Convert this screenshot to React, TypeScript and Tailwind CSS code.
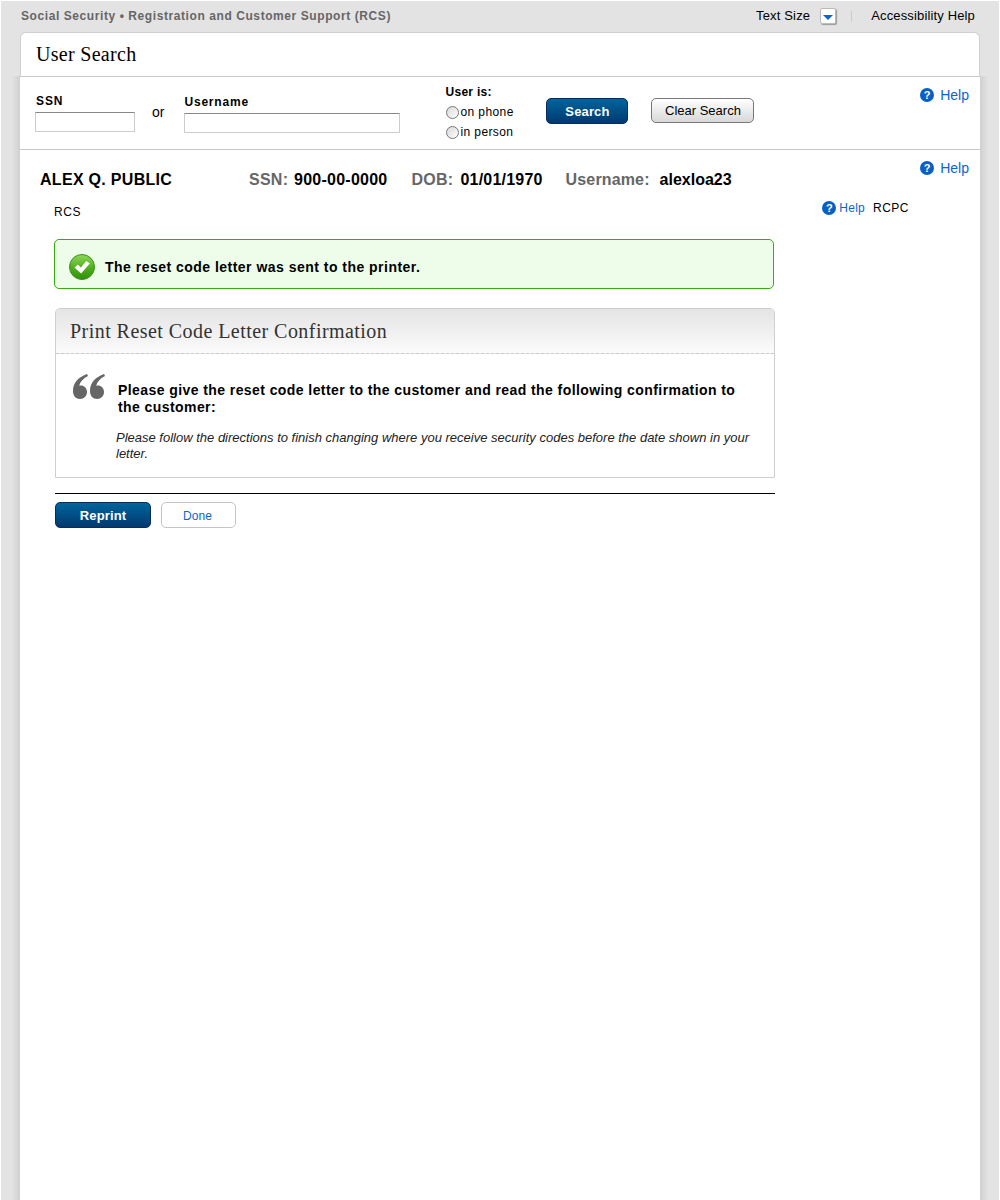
import React from "react";

const sans = "font-['Liberation_Sans',Arial,sans-serif]";
const serif = "font-['Liberation_Serif','Times_New_Roman',serif]";

const HelpIcon = () => (
  <span className="flex h-[14px] w-[14px] items-center justify-center rounded-full bg-[#0a5fc4] text-[11px] font-bold leading-none text-white">?</span>
);

const HelpLink = ({ className = "" }: { className?: string }) => (
  <div className={`flex items-center text-[14px] leading-4 text-[#0a66cc] ${className}`}>
    <HelpIcon />
    <span className="ml-[6px]">Help</span>
  </div>
);

const Radio = ({ label }: { label: string }) => (
  <div className="flex h-5 items-center">
    <span className="h-[13px] w-[13px] rounded-full border border-[#777] bg-gradient-to-br from-[#d8d8d8] to-white" />
    <span className="ml-[1px] tracking-[0.4px]">{label}</span>
  </div>
);

const BlueButton = ({ children, className = "" }: { children: React.ReactNode; className?: string }) => (
  <button className={`h-[26px] rounded-[5px] border border-[#0b2a5e] bg-gradient-to-b from-[#00659c] to-[#003a70] pt-[1px] text-[13px] font-bold tracking-[0.15px] text-white ${className}`}>
    {children}
  </button>
);

const CheckIcon = () => (
  <svg width="26" height="26" viewBox="0 0 26 26" className="shrink-0">
    <defs>
      <linearGradient id="okGreen" x1="0" y1="0" x2="0" y2="1">
        <stop offset="0" stopColor="#8ed85a" />
        <stop offset="0.55" stopColor="#4fae1c" />
        <stop offset="1" stopColor="#2f8f0c" />
      </linearGradient>
    </defs>
    <circle cx="13" cy="13" r="12.500" fill="url(#okGreen)" stroke="#3b8f1c" />
    <path d="M5.500 13.500l3.300-3 3 3 5.500-6.500 3.500 2.500-8.700 10z" fill="#fff" />
  </svg>
);

const QuoteIcon = () => (
  <svg width="34" height="27" viewBox="0 0 34 27" className="shrink-0">
    <path d="M15 1C7 4 1 9 1 18c0 5 3 8 7 8s7-3 7-7-3-6.500-6-6.500c-.8 0-1.300.1-1.800.3C8 9 11 5.500 16 3z" fill="#666" />
    <path d="M32 1c-8 3-14 8-14 17 0 5 3 8 7 8s7-3 7-7-3-6.500-6-6.500c-.8 0-1.300.1-1.800.3C25 9 28 5.500 33 3z" fill="#666" />
  </svg>
);

const Info = ({ label, value, labelW, className = "" }: { label: string; value: string; labelW: string; className?: string }) => (
  <div className={`flex text-[16px] font-bold ${className}`}>
    <span className={`text-[#666] ${labelW}`}>{label}</span>
    <span className="text-black">{value}</span>
  </div>
);

export default function App() {
  return (
    <div className={`${sans} h-[1200px] overflow-hidden bg-white pl-[1px] pr-[1px] pt-[1px] text-black`}>
      <div className="flex h-full flex-col bg-[#e3e3e3]">
        {/* top bar */}
        <div className="flex h-[31px] shrink-0 items-center pl-[20px] pr-[24px] pb-[1px]">
          <span className="text-[12px] font-bold tracking-[0.58px] text-[#666]">Social Security • Registration and Customer Support (RCS)</span>
          <div className="ml-auto flex items-center text-[13px] tracking-[0.15px]">
            <span>Text Size</span>
            <span className="ml-[10px] flex h-[16px] w-[16px] items-center justify-center rounded-[2px] border border-[#bbb] bg-white shadow-[1px_1px_1px_#999]">
              <span className="mt-[2px] h-0 w-0 border-x-[5px] border-t-[5px] border-x-transparent border-t-[#0a66cc]" />
            </span>
            <span className="ml-[15px] h-[11px] w-px bg-[#ccc]" />
            <span className="ml-[19px]">Accessibility Help</span>
          </div>
        </div>

        {/* title */}
        <div className="mx-[19px] flex h-[44px] shrink-0 items-center rounded-t-[6px] border-x border-t border-[#d0d0d0] bg-white pb-[2px] pl-[15px]">
          <h1 className={`${serif} text-[20px] leading-none tracking-[0.3px]`}>User Search</h1>
        </div>

        <div className="flex min-h-0 flex-1">
          <div className="w-[11px] shrink-0" />
          <div className="w-[8px] shrink-0 bg-gradient-to-r from-[#e3e3e3] to-[#cfcfcf]" />
          <div className="min-w-0 flex-1 bg-white">
            {/* search row */}
            <div className="flex h-[74px] border-y border-[#c8c8c8] text-[12px]">
              <div className="ml-[15px] mt-[16px] w-[100px]">
                <label className="block pl-[1px] font-bold leading-4 tracking-[0.9px]">SSN</label>
                <input className="mt-[3px] block h-[20px] w-[100px] border border-[#ccc] border-t-[#888]" />
              </div>
              <span className="ml-[17px] mt-[27px] text-[14px] leading-4">or</span>
              <div className="ml-[20px] mt-[17px] w-[216px]">
                <label className="block font-bold leading-4 tracking-[0.8px]">Username</label>
                <input className="mt-[3px] block h-[20px] w-[216px] border border-[#ccc] border-t-[#888]" />
              </div>
              <div className="ml-[45px] mt-[7px] w-[101px]">
                <div className="font-bold leading-4 tracking-[0.3px]">User is:</div>
                <div className="ml-[1px] mt-[2px]">
                  <Radio label="on phone" />
                  <Radio label="in person" />
                </div>
              </div>
              <BlueButton className="mt-[21px] w-[82px]">Search</BlueButton>
              <button className="ml-[23px] mt-[21px] h-[25px] w-[103px] rounded-[5px] border border-[#777] bg-gradient-to-b from-white to-[#d8d8d8] text-[13px]">Clear Search</button>
              <HelpLink className="ml-auto mr-[11px] mt-[10px] self-start" />
            </div>

            {/* customer info */}
            <div className="flex h-[47px] items-start pl-[20px]">
              <div className="mt-[21px] w-[209px] text-[16px] font-bold leading-[18px] tracking-[0.3px]">ALEX Q. PUBLIC</div>
              <Info className="mt-[21px] leading-[18px] tracking-[0.25px]" label="SSN:" value="900-00-0000" labelW="w-[45px]" />
              <Info className="ml-[24px] mt-[21px] leading-[18px] tracking-[0.2px]" label="DOB:" value="01/01/1970" labelW="w-[49px]" />
              <Info className="ml-[23px] mt-[21px] leading-[18px]" label="Username:" value="alexloa23" labelW="w-[94px] tracking-[0.15px]" />
              <HelpLink className="ml-auto mr-[11px] mt-[10px]" />
            </div>

            <div className="relative pl-[34px]">
              <div className="flex h-[42px] w-[855px] items-start text-[12px] leading-4">
                <span className="mt-[7px] tracking-[0.6px]">RCS</span>
                <div className="ml-auto mt-[3px] flex items-center">
                  <div className="flex items-center text-[12px] leading-4 text-[#0a66cc]">
                    <HelpIcon />
                    <span className="ml-[3px] tracking-[0.25px]">Help</span>
                  </div>
                  <span className="ml-[8px] tracking-[0.5px]">RCPC</span>
                </div>
              </div>

              {/* success message */}
              <div className="flex h-[50px] w-[720px] items-center rounded-[5px] border border-[#3aaa10] bg-[#edfdea] pl-[14px] pt-[6px]">
                <CheckIcon />
                <span className="ml-[10px] text-[14px] font-bold tracking-[0.48px]">The reset code letter was sent to the printer.</span>
              </div>

              {/* confirmation panel */}
              <div className="ml-[1px] mt-[19px] h-[170px] w-[720px] rounded-t-[5px] border border-[#cfcfcf]">
                <div className="flex h-[45px] items-center border-b border-dashed border-[#ccc] bg-gradient-to-b from-[#e4e4e4] to-[#fbfbfb] pl-[14px]">
                  <h2 className={`${serif} text-[20px] leading-none tracking-[0.45px] text-[#333]`}>Print Reset Code Letter Confirmation</h2>
                </div>
                <div className="flex pl-[16px] pt-[19px]">
                  <QuoteIcon />
                  <div className="pr-[12px]">
                    <p className="ml-[12px] mt-[9px] pr-[16px] text-[14px] font-bold leading-[17px] tracking-[0.42px]">Please give the reset code letter to the customer and read the following confirmation to the customer:</p>
                    <p className="ml-[10px] mt-[14px] text-[13px] italic leading-4 text-[#222]">Please follow the directions to finish changing where you receive security codes before the date shown in your letter.</p>
                  </div>
                </div>
              </div>

              <div className="ml-[1px] mt-[15px] h-px w-[720px] bg-black" />

              <div className="ml-[1px] mt-[8px] flex items-start text-[12px]">
                <BlueButton className="w-[96px]">Reprint</BlueButton>
                <button className="ml-[10px] h-[26px] w-[75px] rounded-[5px] border border-[#c4c4c4] bg-white pr-[2px] pt-[1px] tracking-[0.1px] text-[#0a66cc]">Done</button>
              </div>
            </div>
          </div>
          <div className="w-[8px] shrink-0 bg-gradient-to-r from-[#cfcfcf] to-[#e3e3e3]" />
          <div className="w-[11px] shrink-0" />
        </div>
      </div>
    </div>
  );
}
